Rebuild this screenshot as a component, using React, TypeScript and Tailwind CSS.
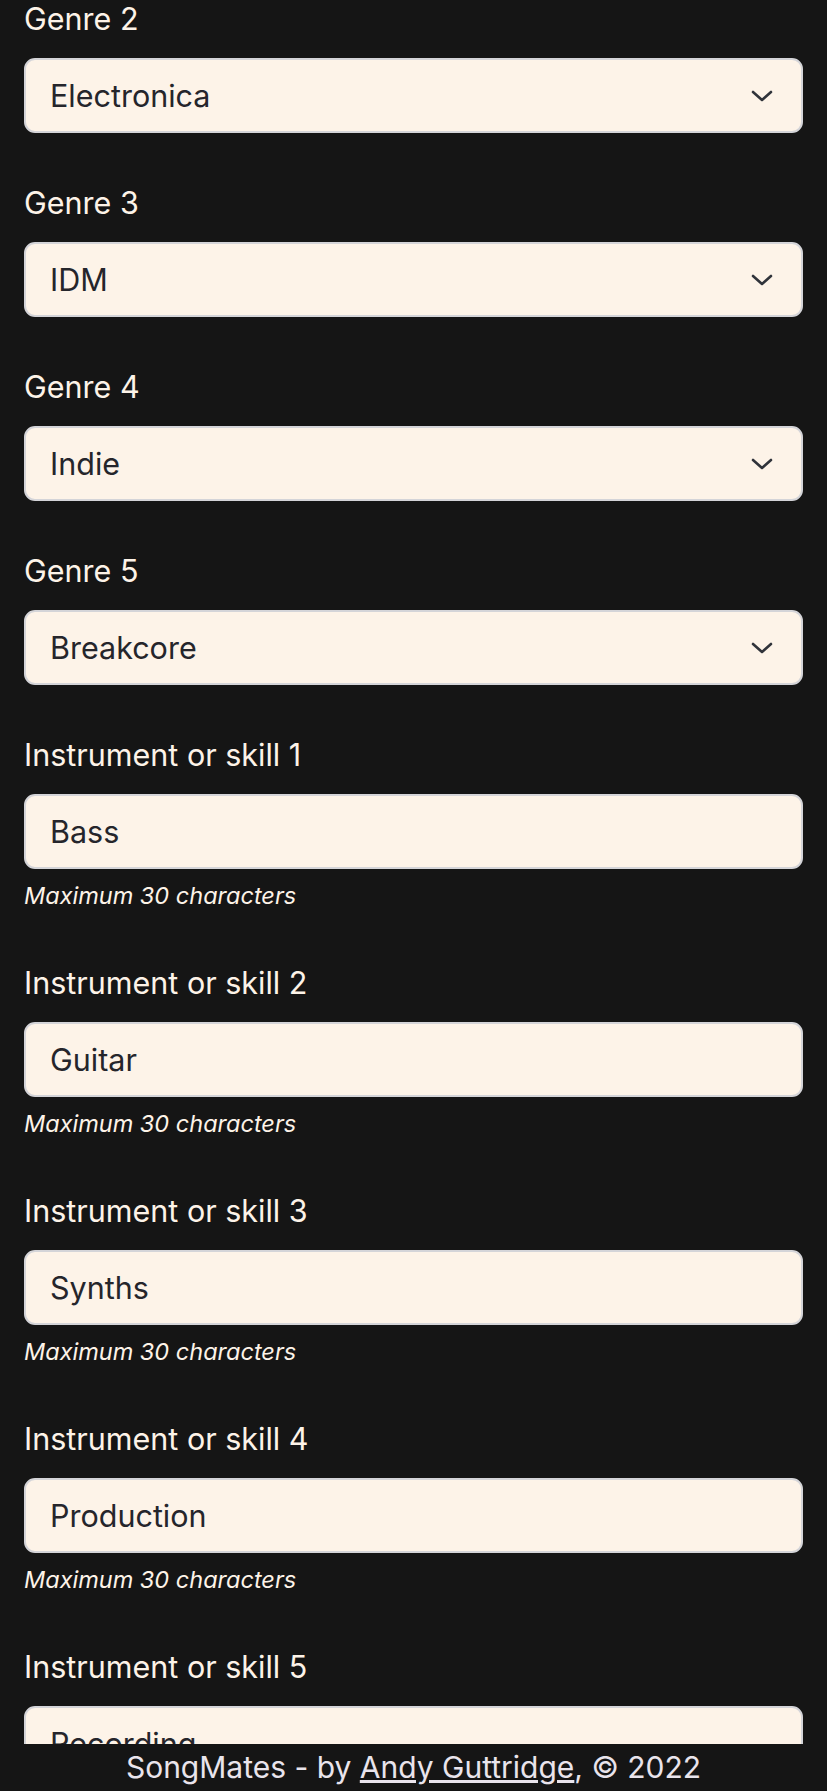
const genres = [
  { id: 2, value: "Electronica" },
  { id: 3, value: "IDM" },
  { id: 4, value: "Indie" },
  { id: 5, value: "Breakcore" },
];

const skills = [
  { id: 1, value: "Bass" },
  { id: 2, value: "Guitar" },
  { id: 3, value: "Synths" },
  { id: 4, value: "Production" },
  { id: 5, value: "Recording" },
];

const boxClass =
  "flex items-center w-full h-[75px] px-6 rounded-[11px] border-2 border-[#d4d4d8] bg-[#fdf3e8] text-[30.5px] text-[#25252b]";

function Chevron() {
  return (
    <svg
      viewBox="0 0 22 12"
      className="w-[22px] h-[12px] mr-1 text-[#30333a]"
      fill="none"
      stroke="currentColor"
      strokeWidth="2.6"
      strokeLinecap="round"
      strokeLinejoin="round"
    >
      <path d="M2 2l9 8 9-8" />
    </svg>
  );
}

export default function App() {
  return (
    <div
      className="min-h-screen bg-[#151515] text-[#fdf3e8]"
      style={{ fontFamily: "Inter, 'Noto Sans', sans-serif" }}
    >
      <form className="flex flex-col gap-[51px] px-6 pb-[120px]">
        {genres.map((genre) => (
          <div key={genre.id} className="flex flex-col">
            <label className="text-[30.5px] leading-[38px] mb-5">Genre {genre.id}</label>
            <div className={`${boxClass} justify-between`}>
              <span>{genre.value}</span>
              <Chevron />
            </div>
          </div>
        ))}
        {skills.map((skill) => (
          <div key={skill.id} className="flex flex-col">
            <label className="text-[30.5px] leading-[38px] mb-5">
              Instrument or skill {skill.id}
            </label>
            <div className={boxClass}>
              <span>{skill.value}</span>
            </div>
            <p className="mt-[9px] text-[23.5px] leading-[35px] italic">Maximum 30 characters</p>
          </div>
        ))}
      </form>
      <footer className="fixed bottom-0 left-0 w-full h-[47px] flex items-center justify-center bg-[#151515] text-[30px] text-[#e9e4ec]">
        <span>
          SongMates - by{" "}
          <a href="#" className="underline">
            Andy Guttridge
          </a>
          , © 2022
        </span>
      </footer>
    </div>
  );
}
